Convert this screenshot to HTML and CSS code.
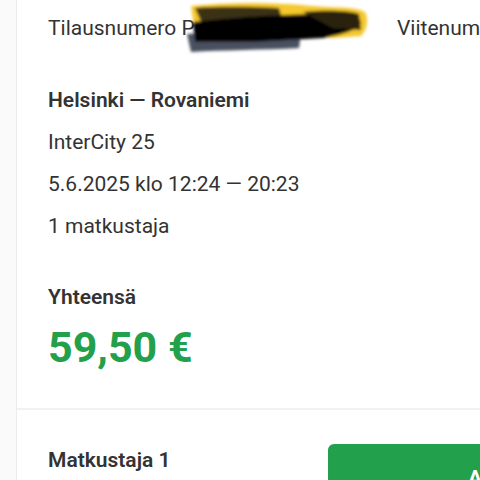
FILE: index.html
```html
<!DOCTYPE html>
<html lang="fi">
<head>
<meta charset="utf-8">
<link rel="stylesheet" href="styles.css">
</head>
<body>
<div class="page">
  <div class="gutter"></div>
  <main class="card">
    <section class="summary">
      <div class="ids">
        <div class="id-col">Tilausnumero P
          <svg class="redact" width="190" height="56" viewBox="0 0 190 56" aria-hidden="true">
            <defs><filter id="soft"><feGaussianBlur stdDeviation="1.6"/></filter></defs>
            <g filter="url(#soft)">
              <path d="M8 6 C50 1 100 3 130 6 C150 8 170 6 182 12 C186 20 184 30 178 36 L150 38 L110 34 L60 36 L12 34 Z" fill="#f4c21a" opacity="0.9"/>
              <path d="M12 8 C40 6 70 7 96 8 L100 22 L20 26 Z" fill="#3a3318"/>
              <path d="M4 34 C40 30 80 32 118 34 L116 48 C80 50 40 50 8 52 Z" fill="#4a5160"/>
              <path d="M10 22 C60 16 110 14 150 14 C165 14 176 16 178 22 C176 30 160 34 140 38 L70 42 L12 42 Z" fill="#050505"/>
              <path d="M120 12 C140 10 165 10 176 14 L178 30 L150 28 Z" fill="#2a2410"/>
            </g>
          </svg>
        </div>
        <div class="id-col">Viitenumero</div>
      </div>
      <div class="trip">
        <div class="route">Helsinki — Rovaniemi</div>
        <div class="line">InterCity 25</div>
        <div class="line">5.6.2025 klo 12:24 — 20:23</div>
        <div class="line">1 matkustaja</div>
      </div>
      <div class="total">
        <div class="total-label">Yhteensä</div>
        <div class="price">59,50 €</div>
      </div>
    </section>
    <section class="passenger">
      <div class="passenger-title">Matkustaja 1</div>
      <button class="btn" type="button">Avaa</button>
    </section>
  </main>
</div>
</body>
</html>
```

FILE: styles.css
```css
html, body {
  margin: 0;
  padding: 0;
  background: #ffffff;
  overflow: hidden;
  width: 480px;
  height: 480px;
}
.page {
  display: flex;
  font-family: Roboto, "Noto Sans", sans-serif;
  color: #333333;
  width: 700px;
  min-height: 480px;
}
.gutter {
  width: 16px;
  flex-shrink: 0;
  background: #fafafb;
  border-right: 1px solid #ececef;
}
.card {
  flex: 1;
  background: #ffffff;
}
.summary {
  padding: 7px 0 0 31px;
  border-bottom: 2px solid #f1f1f3;
  padding-bottom: 35px;
}
.ids {
  display: flex;
  font-size: 21px;
  line-height: 42px;
}
.id-col {
  width: 349px;
  flex-shrink: 0;
  white-space: nowrap;
  position: relative;
}
.redact {
  position: absolute;
  left: 135px;
  top: -7px;
}
.trip {
  margin-top: 30px;
  font-size: 21px;
  line-height: 42px;
}
.route {
  font-weight: 600;
}
.total {
  margin-top: 29px;
}
.total-label {
  font-size: 21px;
  line-height: 42px;
  font-weight: 600;
}
.price {
  font-size: 43px;
  line-height: 52px;
  font-weight: 700;
  color: #23a04c;
  margin-top: 3px;
}
.passenger {
  display: flex;
  align-items: flex-start;
  padding: 34px 0 0 31px;
}
.passenger-title {
  width: 280px;
  flex-shrink: 0;
  font-size: 21px;
  line-height: 32px;
  font-weight: 600;
}
.btn {
  width: 300px;
  height: 60px;
  border: none;
  border-radius: 6px;
  background: #23a04c;
  color: #ffffff;
  font-family: Roboto, "Noto Sans", sans-serif;
  font-size: 21px;
  font-weight: 700;
  text-align: left;
  padding: 8px 0 0 140px;
}
```
